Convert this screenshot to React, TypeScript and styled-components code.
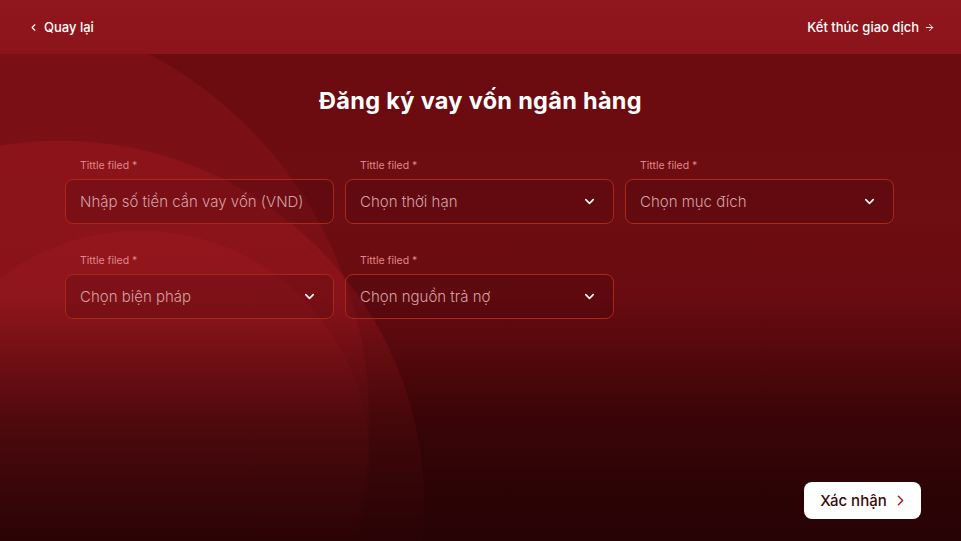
import React from "react";
import styled, { createGlobalStyle } from "styled-components";
import { ChevronLeft, ChevronDown, ChevronRight, ArrowRight } from "lucide-react";

const GlobalStyle = createGlobalStyle`
  html, body { margin: 0; padding: 0; height: 100%; }
  body { font-family: Inter, "Noto Sans", sans-serif; }
  #root { height: 100%; }
  * { box-sizing: border-box; }
`;

const Page = styled.div`
  width: 100%;
  height: 100vh;
  display: flex;
  flex-direction: column;
  overflow: hidden;
  background:
    linear-gradient(180deg, rgba(38, 2, 4, 0) 0%, rgba(38, 2, 4, 0) 55%, rgba(40, 3, 5, 0.6) 78%, rgba(40, 3, 5, 0.97) 100%),
    radial-gradient(circle 230px at 140px 460px, rgba(170, 28, 36, 0.22) 0 99.5%, transparent 100%),
    radial-gradient(circle 365px at 60px 505px, rgba(175, 28, 36, 0.3) 0 99.6%, transparent 100%),
    radial-gradient(circle 415px at -45px 420px, rgba(150, 22, 30, 0.35) 0 99.6%, transparent 100%),
    linear-gradient(180deg, #6a0b10 0%, #6e0d12 40%, #650a0f 65%, #4a0609 85%, #2c0306 100%);
`;

const Header = styled.header`
  height: 54px;
  flex: 0 0 54px;
  display: flex;
  align-items: center;
  justify-content: space-between;
  padding: 0 26px 0 28px;
  background: linear-gradient(180deg, #91161d 0%, #8b141b 100%);
`;

const NavLink = styled.div`
  display: flex;
  align-items: center;
  gap: 5px;
  color: #ffffff;
  font-size: 13px;
  font-weight: 500;
`;

const Main = styled.main`
  flex: 1;
  display: flex;
  flex-direction: column;
  align-items: center;
`;

const Title = styled.h1`
  margin: 33px 0 0;
  font-size: 23.5px;
  line-height: 28px;
  font-weight: 700;
  color: #ffffff;
  letter-spacing: 0.3px;
`;

const FormGrid = styled.div`
  margin-top: 44px;
  display: grid;
  grid-template-columns: repeat(3, 269px);
  column-gap: 11px;
  row-gap: 30px;
  transform: translateX(-1px);
`;

const Field = styled.div`
  display: flex;
  flex-direction: column;
  gap: 7px;
`;

const Label = styled.label`
  padding-left: 15px;
  font-size: 10.5px;
  line-height: 13px;
  color: #e0878b;
  font-weight: 400;
`;

const Box = styled.div`
  height: 45px;
  display: flex;
  align-items: center;
  justify-content: space-between;
  padding: 0 16px 0 14px;
  border: 1px solid #a8291a;
  border-radius: 8px;
  background: rgba(40, 0, 4, 0.16);
  color: #d5a1a4;
  font-size: 15px;
  font-weight: 300;
`;

const Placeholder = styled.span`
  white-space: nowrap;
`;

const Footer = styled.div`
  margin-top: auto;
  align-self: flex-end;
  margin-right: 40px;
  margin-bottom: 22px;
`;

const ConfirmButton = styled.button`
  width: 117px;
  height: 37px;
  display: flex;
  align-items: center;
  justify-content: center;
  gap: 5px;
  border: none;
  border-radius: 8px;
  background: #ffffff;
  color: #3a070a;
  font-family: Inter, "Noto Sans", sans-serif;
  font-size: 15px;
  font-weight: 500;
  padding: 0 0 0 4px;
`;

type FieldDef = { placeholder: string; select: boolean };

const fields: FieldDef[] = [
  { placeholder: "Nhập số tiền cần vay vốn (VND)", select: false },
  { placeholder: "Chọn thời hạn", select: true },
  { placeholder: "Chọn mục đích", select: true },
  { placeholder: "Chọn biện pháp", select: true },
  { placeholder: "Chọn nguồn trả nợ", select: true },
];

export default function App() {
  return (
    <>
      <GlobalStyle />
      <Page>
        <Header>
          <NavLink>
            <ChevronLeft size={11} strokeWidth={2.5} />
            <span>Quay lại</span>
          </NavLink>
          <NavLink>
            <span>Kết thúc giao dịch</span>
            <ArrowRight size={11} strokeWidth={2} />
          </NavLink>
        </Header>
        <Main>
          <Title>Đăng ký vay vốn ngân hàng</Title>
          <FormGrid>
            {fields.map((f, i) => (
              <Field key={i}>
                <Label>Tittle filed *</Label>
                <Box>
                  <Placeholder>{f.placeholder}</Placeholder>
                  {f.select && <ChevronDown size={15} strokeWidth={2.5} color="#ffffff" />}
                </Box>
              </Field>
            ))}
          </FormGrid>
          <Footer>
            <ConfirmButton>
              Xác nhận
              <ChevronRight size={17} strokeWidth={2} color="#b3161e" />
            </ConfirmButton>
          </Footer>
        </Main>
      </Page>
    </>
  );
}
